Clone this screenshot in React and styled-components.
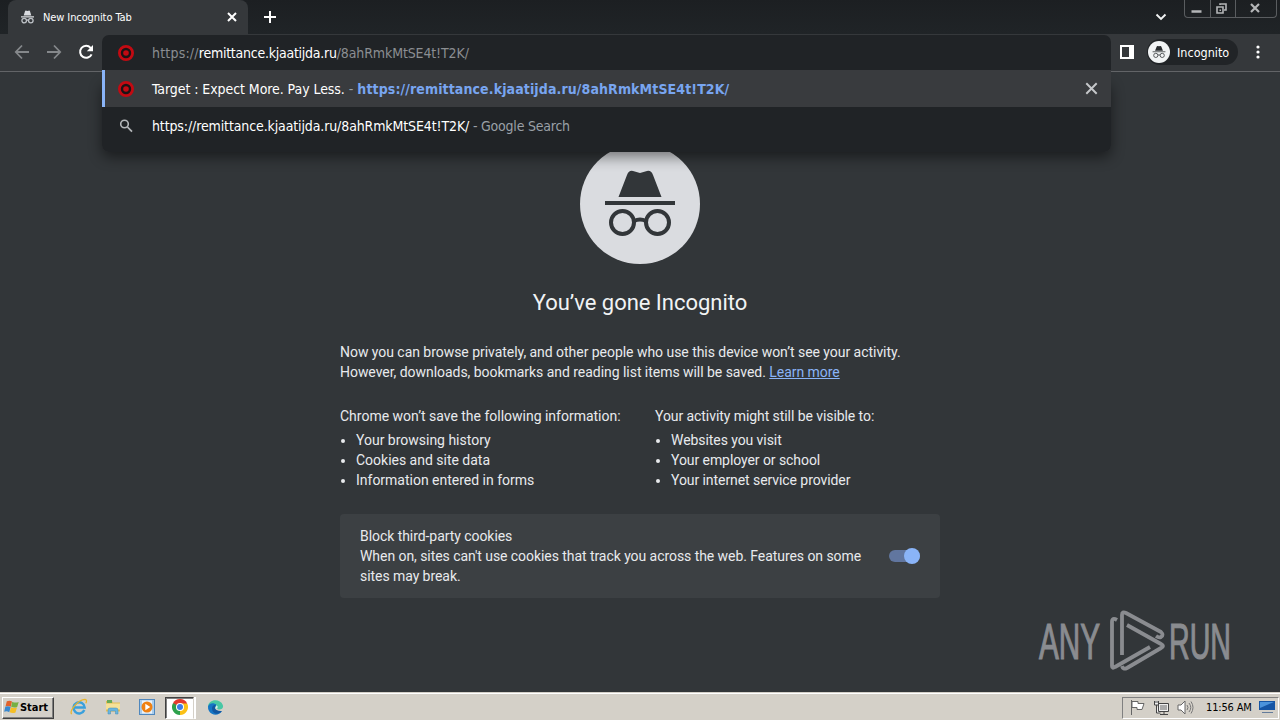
import React from 'react';
import styled, { createGlobalStyle } from 'styled-components';

const Global = createGlobalStyle`
  * { box-sizing: border-box; }
  body { margin: 0; background: #323639; overflow: hidden; }
`;

const ui = `"DejaVu Sans Condensed", "DejaVu Sans", "Noto Sans", sans-serif`;

const Screen = styled.div`
  width: 1280px;
  height: 720px;
  display: flex;
  flex-direction: column;
  position: relative;
  background: #323639;
  color: #e8eaed;
  font-family: Roboto, sans-serif;
`;
const Label = styled.span`
  font-family: ${ui};
  font-size: ${p => p.$size || 14}px;
  letter-spacing: ${p => p.$ls || 0}px;
  color: ${p => p.$color || '#fff'};
  font-weight: ${p => (p.$bold ? 700 : 400)};
  white-space: pre;
`;
const Clock = styled(Label)`
  margin-left: 5px;
`;
const TabStrip = styled.div`
  height: 34px;
  flex: none;
  display: flex;
  align-items: flex-start;
  padding-left: 8px;
  background: linear-gradient(#1c1f22, #202427);
`;
const Tab = styled.div`
  width: 240px;
  height: 34px;
  display: flex;
  align-items: center;
  padding: 0 11px 0 12px;
  gap: 8px;
  background: #35383b;
  border-radius: 8px 8px 0 0;
  svg:last-child { margin-left: auto; }
`;
const NewTab = styled.div`
  width: 44px;
  height: 34px;
  display: flex;
  align-items: center;
  justify-content: center;
`;
const StripEnd = styled.div`
  margin-left: auto;
  display: flex;
  gap: 17px;
`;
const Chevron = styled.div`
  padding-top: 13px;
  line-height: 0;
`;
const WindowButtons = styled.div`
  display: flex;
  width: 93px;
  height: 18px;
  margin-right: 3px;
  border: 1px solid #5a5d60;
  border-top: 0;
  border-radius: 0 0 4px 4px;
`;
const WindowButton = styled.div`
  flex: ${p => p.$w} 0 0;
  display: flex;
  justify-content: center;
  align-items: center;
  padding: 0 2px 1px 0;
  & + & { border-left: 1px solid #5a5d60; }
`;
const Toolbar = styled.div`
  height: 38px;
  flex: none;
  display: flex;
  align-items: center;
  padding: 0 16px 1px 14px;
  background: #35383b;
  border-bottom: 1px solid #626467;
`;
const NavButtons = styled.div`
  display: flex;
  gap: 16px;
`;
const ToolbarEnd = styled.div`
  margin-left: auto;
  display: flex;
  align-items: center;
`;
const Profile = styled.div`
  width: 91px;
  height: 26px;
  margin: 0 14px 0 13px;
  display: flex;
  align-items: center;
  gap: 7px;
  padding-left: 1px;
  border-radius: 13px;
  background: #212427;
  svg { flex: none; }
`;
const Popup = styled.div`
  position: absolute;
  left: 102px;
  top: 35px;
  width: 1009px;
  height: 117px;
  border-radius: 7px;
  background: #202326;
  overflow: hidden;
`;
const PopupShadow = styled.div`
  position: absolute;
  left: 102px;
  top: 80px;
  width: 1009px;
  height: 72px;
  border-radius: 7px;
  box-shadow: 0 5px 14px rgba(0, 0, 0, 0.48);
`;
const Row = styled.div`
  height: ${p => p.$h}px;
  display: flex;
  align-items: center;
  padding: 0 13px 0 ${p => (p.$active ? 13 : 16)}px;
  background: ${p => (p.$active ? '#393b3e' : 'transparent')};
  border-left: ${p => (p.$active ? '3px solid #8ab4f8' : '0')};
  > svg:last-child { margin-left: auto; }
`;
const RowIcon = styled.div`
  width: 34px;
  line-height: 0;
`;
const Page = styled.main`
  flex: 1;
  display: flex;
  flex-direction: column;
  align-items: center;
  padding-top: 72px;
`;
const Title = styled.h1`
  margin: 25px 0 0;
  font-size: 22px;
  font-weight: 400;
  line-height: 28px;
  letter-spacing: -0.02px;
  color: #f1f3f4;
`;
const Copy = styled.div`
  width: 600px;
  font-size: 14px;
  line-height: 20px;
  white-space: nowrap;
  letter-spacing: ${p => p.$ls || 0}px;
`;
const Intro = styled(Copy)`
  margin-top: 25px;
`;
const Link = styled.a`
  color: #8ab4f8;
  text-decoration: underline;
`;
const Columns = styled.div`
  width: 600px;
  margin-top: 24px;
  display: flex;
`;
const Column = styled.div`
  width: ${p => p.$w}px;
  font-size: 14px;
  line-height: 20px;
  letter-spacing: ${p => p.$ls || 0}px;
  ul { margin: 4px 0 0; padding-left: 16px; }
`;
const CookieCard = styled.div`
  width: 600px;
  height: 84px;
  margin-top: 24px;
  padding: 0 20px;
  display: flex;
  align-items: center;
  justify-content: space-between;
  background: #3c4043;
  border-radius: 4px;
  ${Copy} { width: auto; }
`;
const Toggle = styled.div`
  width: 31px;
  height: 12px;
  display: flex;
  align-items: center;
  justify-content: flex-end;
  border-radius: 6px;
  background: #61769f;
  &::after {
    content: '';
    width: 16px;
    height: 16px;
    border-radius: 8px;
    background: #8ab4f8;
  }
`;
const Watermark = styled.svg`
  position: absolute;
  left: 1034px;
  top: 606px;
`;
const Taskbar = styled.footer`
  height: 28px;
  flex: none;
  display: flex;
  align-items: center;
  padding: 3px 0 1px 2px;
  background: #d4d0c8;
  border-top: 1px solid #d4d0c8;
  box-shadow: inset 0 1px #fff;
`;
const Start = styled.div`
  width: 52px;
  height: 22px;
  display: flex;
  align-items: center;
  padding: 0 0 1px 1px;
  border: 1px solid;
  border-color: #fff #404040 #404040 #fff;
  box-shadow: inset -1px -1px #808080;
`;
const Launchers = styled.div`
  display: flex;
  align-items: center;
  margin-left: 8px;
`;
const Launcher = styled.div`
  width: ${p => (p.$active ? 29 : 34)}px;
  height: 22px;
  margin: ${p => (p.$active ? '0 4px 0 1px' : '0')};
  padding-bottom: 1px;
  display: flex;
  align-items: center;
  justify-content: center;
  background: ${p => (p.$active ? '#fff' : 'none')};
  border: ${p => (p.$active ? '1px solid #404040' : '0')};
  border-right-color: #d4d0c8;
  border-bottom-color: #fff;
  box-shadow: ${p => (p.$active ? 'inset 1px 1px #808080, 2px 0 #fff' : 'none')};
`;
const Tray = styled.div`
  width: 157px;
  height: 22px;
  margin-left: auto;
  margin-right: 1px;
  padding: 0 3px 1px 6px;
  display: flex;
  align-items: center;
  border: 1px solid;
  border-color: #808080 #fff #fff #808080;
  gap: 7px;
  svg { flex: none; }
`;

const Cross = ({ s = 10, c = '#fff', w = 1.8 }) => (
  <svg width={s} height={s} viewBox="0 0 10 10">
    <path d="M1 1 9 9M9 1 1 9" stroke={c} strokeWidth={w} />
  </svg>
);
const Arrow = ({ forward }) => (
  <svg width="16" height="16" viewBox="0 0 16 16">
    <path d={forward ? 'M1 8H14M8 1.500 14.200 8 8 14.500' : 'M15 8H2M8 1.500 1.800 8 8 14.500'} fill="none" stroke="#85888b" strokeWidth="1.800" />
  </svg>
);
const Bullseye = () => (
  <svg width="16" height="16" viewBox="0 0 16 16">
    <circle cx="8" cy="8" r="6.600" fill="#1b1416" stroke="#c20a12" strokeWidth="2.800" />
    <circle cx="8" cy="8" r="2.800" fill="#c20a12" />
  </svg>
);
const Spy = ({ size, disc, ink }) => (
  <svg width={size} height={size} viewBox="0 0 120 120">
    <circle cx="60" cy="60" r="60" fill={disc} />
    <g fill={ink}>
      <path d="M38.500 53 47 31q2-5 6-4l7 2 7-2q4-1 6 4l8.500 22Z" />
      <path d="M25 57h70v4H25z" />
    </g>
    <g fill="none" stroke={ink} strokeWidth="4">
      <circle cx="42.500" cy="78.500" r="11.500" />
      <circle cx="77.500" cy="78.500" r="11.500" />
      <path d="M54 77q6-3 12 0" />
    </g>
  </svg>
);
const TabSpy = () => (
  <svg width="15" height="14" viewBox="0 0 15 14">
    <path d="M3.700 5.500 5 1.300Q5.300.3 6.500.7L7.500 1l1-.3q1.200-.4 1.500.6L11.300 5.500ZM1 6.200h13v1.300H1z" fill="#dadce0" />
    <g fill="none" stroke="#bdc1c6" strokeWidth="1.300">
      <circle cx="4.200" cy="10.600" r="2.300" />
      <circle cx="10.800" cy="10.600" r="2.300" />
      <path d="M6.500 10.300q1-.6 2 0" />
    </g>
  </svg>
);

const Windows = () => (
  <svg width="16" height="16" viewBox="0 0 17 16">
    <path d="M3 2q3-1.500 5.500.2L7.200 7.700Q4.500 6.400 1.600 7.400Z" fill="#e2622b" />
    <path d="M8.800 2.400q3.300 1.700 6.800.2l-1.600 5.300q-3 1.200-6.400-.2Z" fill="#76b043" />
    <path d="M1.400 7.700q3-1.200 5.700.3l-1.500 5.500Q3 12 .2 13Z" fill="#3988cf" />
    <path d="M7.400 8.200q3.400 1.400 6.400.2l-1.600 5.400q-3 1.200-6.200-.2Z" fill="#f5bf26" />
  </svg>
);
const Explorer = () => (
  <svg width="18" height="18" viewBox="0 0 18 18">
    <path d="M14.300 12A5.600 5.600 0 1 1 14.700 9.500H4.500" fill="none" stroke="#3aa0dc" strokeWidth="2.400" />
    <path d="M1.700 16.200C-1 13 8 1.500 15 1.300q2.500.5.800 4" fill="none" stroke="#e8b52c" strokeWidth="1.300" />
  </svg>
);
const Folder = () => (
  <svg width="18" height="18" viewBox="0 0 18 18">
    <path d="M2 3h6l1 1.500h7v9H2z" fill="#e4bd55" />
    <path d="M3 2h5v3H3z" fill="#67a957" />
    <path d="M2 5.500h14v6H2z" fill="#f5e199" />
    <path d="M4 16v-4q0-2 2-2h6q2 0 2 2v4h-2.500v-3h-5v3z" fill="#69b5df" stroke="#438db7" strokeWidth=".5" />
  </svg>
);
const Player = () => (
  <svg width="16" height="16" viewBox="0 0 16 16">
    <rect x=".5" y=".5" width="15" height="15" fill="#a9cdec" stroke="#4f87bd" />
    <rect x="3" y="1.500" width="10" height="13" fill="#e9f2fa" />
    <circle cx="8" cy="8" r="5.500" fill="#ef8112" />
    <path d="m6.300 4.800 5 3.200-5 3.200Z" fill="#fff" />
  </svg>
);
const Chrome = () => (
  <svg width="16" height="16" viewBox="0 0 16 16">
    <path d="M8 8 1.070 4A8 8 0 0 1 14.930 4Z" fill="#e33b2e" />
    <path d="M8 8 14.930 4A8 8 0 0 1 8 16Z" fill="#fbc116" />
    <path d="M8 8V16A8 8 0 0 1 1.070 4Z" fill="#2da14c" />
    <path d="M8 4h6.930L11.500 10 8 8Z" fill="#fbc116" />
    <path d="M1.070 4H14.930L14.900 4.500H8L4.500 9Z" fill="#e33b2e" />
    <path d="m1.070 4 3.500 6L8 8Z" fill="#2da14c" />
    <circle cx="8" cy="8" r="4" fill="#fff" />
    <circle cx="8" cy="8" r="3" fill="#3c7de6" />
  </svg>
);
const Edge = () => (
  <svg width="17" height="17" viewBox="0 0 17 17">
    <path d="M1 8C1 0 13-1 15.800 6c1.300 4-2.300 5-5 4.300L8 8Z" fill="#48c7a5" />
    <path d="M1 7.500C2 4 7 3 9.500 6L8 8.500c-.5 3 2.500 5 7 3.500-3 5-10 5-13 0Q.8 9.800 1 7.500Z" fill="#1676c5" />
    <path d="M5 9q.3-3 4-3.500-2.500 3.500.5 5.500 2.500 1.300 5.500 1-4 4.500-8 1.800Q4.800 12 5 9Z" fill="#1257a0" />
    <path d="M9.300 6.200q2 .6 1.200 3-1.500.6-2-.6Z" fill="#d4eee8" />
  </svg>
);

export default function App() {
  const url = 'https://remittance.kjaatijda.ru/8ahRmkMtSE4t!T2K/';
  return (
    <Screen>
      <Global />
      <TabStrip>
        <Tab>
          <TabSpy />
          <Label $size={11} $ls={-0.1}>New Incognito Tab</Label>
          <Cross s={10} w={2} />
        </Tab>
        <NewTab>
          <svg width="12" height="12" viewBox="0 0 12 12"><path d="M6 0v12M0 6h12" stroke="#fff" strokeWidth="2" /></svg>
        </NewTab>
        <StripEnd>
          <Chevron>
            <svg width="12" height="8" viewBox="0 0 12 8"><path d="m1.500 1.500 4.500 4.500 4.500-4.500" fill="none" stroke="#f1f3f4" strokeWidth="1.900" /></svg>
          </Chevron>
          <WindowButtons>
            <WindowButton $w={25}>
              <svg width="11" height="11" viewBox="0 0 11 11"><path d="M.5 8.500h10" stroke="#b4b6b8" strokeWidth="2.500" /></svg>
            </WindowButton>
            <WindowButton $w={25}>
              <svg width="11" height="11" viewBox="0 0 11 11"><path d="M4 2V1h6v6H8M1 4h6v6H1z" fill="none" stroke="#b4b6b8" strokeWidth="1.600" /><path d="M3.500 6.500h1.500v1.500H3.500z" fill="#b4b6b8" /></svg>
            </WindowButton>
            <WindowButton $w={42}><Cross s={10} c="#b4b6b8" w={2.2} /></WindowButton>
          </WindowButtons>
        </StripEnd>
      </TabStrip>
      <Toolbar>
        <NavButtons>
          <Arrow />
          <Arrow forward />
          <svg width="16" height="16" viewBox="0 0 16 16">
            <path d="M13.600 10.300A6 6 0 1 1 12.600 3.800L14 5.200" fill="none" stroke="#fff" strokeWidth="2" />
            <path d="M15 1v6.200H8.800Z" fill="#fff" />
          </svg>
        </NavButtons>
        <ToolbarEnd>
          <svg width="14" height="14" viewBox="0 0 14 14"><path d="M0 0h14v14H0zM2 2v10h7V2z" fill="#fff" fillRule="evenodd" /></svg>
          <Profile>
            <Spy size={22} disc="#f1f3f4" ink="#292c2f" />
            <Label $size={12.5} $ls={0}>Incognito</Label>
          </Profile>
          <svg width="12" height="14" viewBox="0 0 12 14" fill="#fff"><circle cx="6" cy="2" r="1.600" /><circle cx="6" cy="7" r="1.600" /><circle cx="6" cy="12" r="1.600" /></svg>
        </ToolbarEnd>
      </Toolbar>
      <Page>
        <Spy size={120} disc="#dadce0" ink="#323639" />
        <Title>You’ve gone Incognito</Title>
        <Intro $ls={-0.04}>
          Now you can browse privately, and other people who use this device won’t see your activity.<br />
          However, downloads, bookmarks and reading list items will be saved. <Link>Learn more</Link>
        </Intro>
        <Columns>
          <Column $w={315} $ls={-0.01}>
            Chrome won’t save the following information:
            <ul><li>Your browsing history</li><li>Cookies and site data</li><li>Information entered in forms</li></ul>
          </Column>
          <Column $w={285} $ls={-0.07}>
            Your activity might still be visible to:
            <ul><li>Websites you visit</li><li>Your employer or school</li><li>Your internet service provider</li></ul>
          </Column>
        </Columns>
        <CookieCard>
          <Copy $ls={-0.06}>
            Block third-party cookies<br />
            When on, sites can't use cookies that track you across the web. Features on some<br />
            sites may break.
          </Copy>
          <Toggle />
        </CookieCard>
      </Page>
      <Taskbar>
        <Start><Windows /><Label $size={11} $bold $color="#000" $ls={-0.05}>Start</Label></Start>
        <Launchers>
          <Launcher><Explorer /></Launcher>
          <Launcher><Folder /></Launcher>
          <Launcher><Player /></Launcher>
          <Launcher $active><Chrome /></Launcher>
          <Launcher><Edge /></Launcher>
        </Launchers>
        <Tray>
          <svg width="17" height="17" viewBox="0 0 17 17"><path d="M2.500 1v15M3 2.500h6v2h6l-2 6H8v-2H3z" fill="#fff" stroke="#666" /></svg>
          <svg width="17" height="17" viewBox="0 0 17 17"><path d="M5.500 4.500h10v8h-10zM7 15.500h8M11 13v2M1.500 2v4h4V2M3.500 6v8h4M2 3h3" fill="#eee" stroke="#444" /><path d="M7 6h7v5H7z" fill="#aaa" /></svg>
          <svg width="17" height="17" viewBox="0 0 17 17"><path d="M1 6h3l4-4v13l-4-4H1z" fill="#fff" stroke="#666" /><path d="M10 6q2 2.500 0 5M12 4q3.500 4.500 0 9M14 2.500q4 6 0 12" fill="none" stroke="#777" /></svg>
          <Clock $size={11} $color="#000" $ls={-0.15}>11:56 AM</Clock>
          <svg width="16" height="14" viewBox="0 0 16 14"><path d="M0 1h16v9H0z" fill="#1555a5" /><path d="M1 2h14L1 8z" fill="#4b93dc" /><path d="M3 12h11v1H3z" fill="#637b9a" /></svg>
        </Tray>
      </Taskbar>
      <PopupShadow />
      <Popup>
        <Row $h={35}>
          <RowIcon><Bullseye /></RowIcon>
          <Label $color="#8b8e92" $ls={0.2}>https://</Label>
          <Label $ls={-0.25}>remittance.kjaatijda.ru</Label>
          <Label $color="#8b8e92" $ls={-0.12}>/8ahRmkMtSE4t!T2K/</Label>
        </Row>
        <Row $h={37} $active>
          <RowIcon><Bullseye /></RowIcon>
          <Label $ls={-0.07}>Target : Expect More. Pay Less.</Label>
          <Label $color="#9aa0a6"> - </Label>
          <Label $bold $color="#78a5f0" $ls={0.11}>{url}</Label>
          <Cross s={13} c="#c5c7ca" w={1.5} />
        </Row>
        <Row $h={37}>
          <RowIcon>
            <svg width="16" height="16" viewBox="0 0 16 16"><circle cx="6.500" cy="6" r="3.800" fill="none" stroke="#b4b7ba" strokeWidth="1.600" /><path d="m9.500 9 4.500 4.700" stroke="#b4b7ba" strokeWidth="1.800" /></svg>
          </RowIcon>
          <Label $ls={-0.12}>{url}</Label>
          <Label $color="#9aa0a6" $ls={-0.22}> - Google Search</Label>
        </Row>
      </Popup>
      <Watermark width="202" height="70" viewBox="0 0 202 70">
        <g fill="#8a8c90" stroke="#8a8c90" strokeWidth="1.200" fontFamily='"Liberation Sans Narrow", "Liberation Sans", sans-serif' fontSize="50">
          <text x="5" y="53" textLength="61" lengthAdjust="spacingAndGlyphs">ANY</text>
          <text x="135" y="53" textLength="62" lengthAdjust="spacingAndGlyphs">RUN</text>
        </g>
        <g fill="none" stroke="#8a8c90" strokeWidth="3.800" strokeLinejoin="round">
          <path d="M83 14q-5-3-5 2v44q0 3 3 1l35-20" />
          <path d="M88 49V9q0-4 4-2L127 26q3 3 0 5-2 1-5-1" />
          <path d="M93 19l34 19q4 2 0 4L93 62q-4 2-5-2" />
        </g>
      </Watermark>
    </Screen>
  );
}
